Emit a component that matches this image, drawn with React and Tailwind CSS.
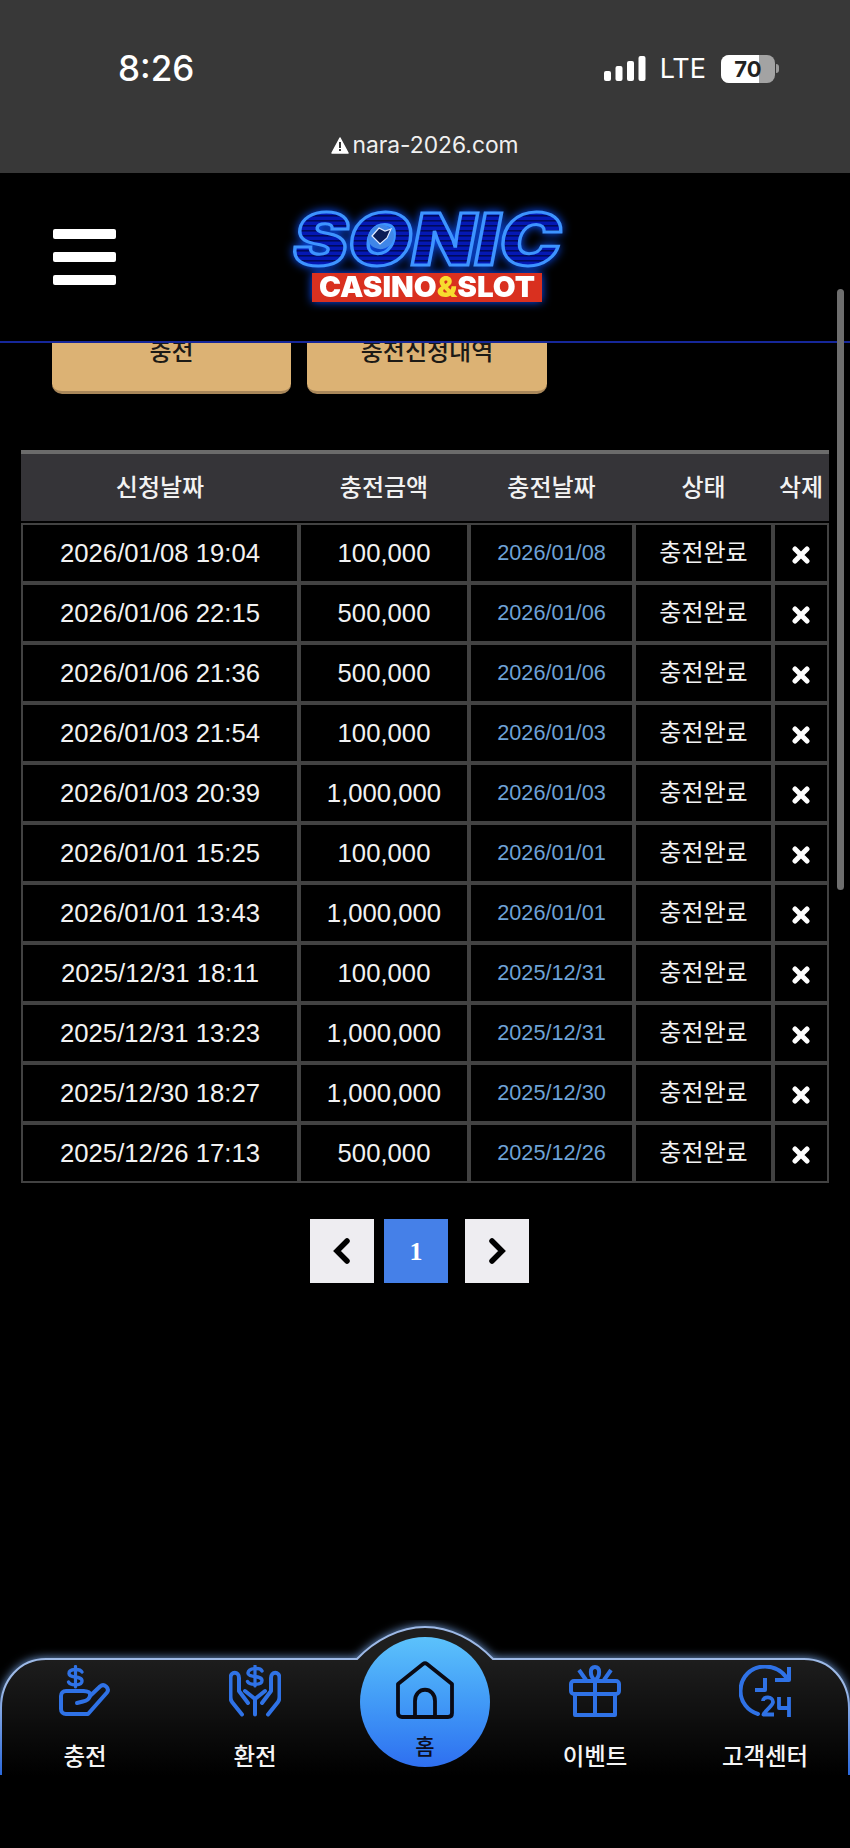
const rows = [
  ['2026/01/08 19:04', '100,000', '2026/01/08'],
  ['2026/01/06 22:15', '500,000', '2026/01/06'],
  ['2026/01/06 21:36', '500,000', '2026/01/06'],
  ['2026/01/03 21:54', '100,000', '2026/01/03'],
  ['2026/01/03 20:39', '1,000,000', '2026/01/03'],
  ['2026/01/01 15:25', '100,000', '2026/01/01'],
  ['2026/01/01 13:43', '1,000,000', '2026/01/01'],
  ['2025/12/31 18:11', '100,000', '2025/12/31'],
  ['2025/12/31 13:23', '1,000,000', '2025/12/31'],
  ['2025/12/30 18:27', '1,000,000', '2025/12/30'],
  ['2025/12/26 17:13', '500,000', '2025/12/26'],
];

const headers = ['신청날짜', '충전금액', '충전날짜', '상태', '삭제'];

const StatusBar = () => (
  <div className="h-[173px] shrink-0 bg-[#383838] text-white relative font-['Inter',sans-serif]">
    <div className="flex items-center justify-between pt-[49px] pl-[118px] pr-[71px] h-[88px]">
      <span className="text-[35px] font-medium leading-none">8:26</span>
      <div className="flex items-center">
        <svg width="42" height="25" viewBox="0 0 42 25" fill="#fff">
          <rect x="0" y="15" width="7" height="10" rx="2" />
          <rect x="11.5" y="10" width="7" height="15" rx="2" />
          <rect x="23" y="5" width="7" height="20" rx="2" />
          <rect x="34.5" y="0" width="7" height="25" rx="2" />
        </svg>
        <span className="ml-[14px] text-[27px] font-normal leading-none">LTE</span>
        <div className="ml-[15px] relative flex h-[28px] w-[54px] items-center justify-center rounded-[8px] bg-[#a3a3a3] overflow-hidden">
          <div className="absolute inset-y-0 left-0 w-[38px] bg-white" />
          <span className="relative text-[22px] font-bold leading-none text-[#222]">70</span>
        </div>
        <div className="ml-[1px] h-[9px] w-[3px] rounded-r bg-[#9a9a9a]" />
      </div>
    </div>
    <div className="flex items-center justify-center mt-[46px]">
      <svg width="18" height="17" viewBox="0 0 18 17" className="mr-[3px]">
        <path d="M9 1 L17 16 H1 Z" fill="#fff" stroke="#fff" strokeWidth="1.5" strokeLinejoin="round" />
        <rect x="8" y="5" width="2" height="6" fill="#383838" />
        <rect x="8" y="12" width="2" height="2" fill="#383838" />
      </svg>
      <span className="text-[22.8px] leading-none text-[#f0f0f0]">nara-2026.com</span>
    </div>
  </div>
);

const Logo = () => (
  <svg width="290" height="110" viewBox="0 0 290 110" className="drop-shadow-[0_0_5px_#0a50ff]">
    <defs>
      <pattern id="scan" width="4" height="5" patternUnits="userSpaceOnUse">
        <rect width="4" height="5" fill="#0418b4" />
        <rect width="4" height="1.6" fill="#000a5c" />
      </pattern>
    </defs>
    <text
      x="13"
      y="65"
      textLength="268"
      lengthAdjust="spacingAndGlyphs"
      fontFamily="'Inter', sans-serif"
      fontWeight="900"
      fontStyle="italic"
      fontSize="72"
      fill="url(#scan)"
      stroke="#3d94ff"
      strokeWidth="3"
    >
      SONIC
    </text>
    <ellipse cx="101" cy="37" rx="13" ry="12" fill="#3f86e8" transform="rotate(-20 101 37)" />
    <path d="M92 36 L99 28 L105 31 L111 29 L107 38 L100 44 Z" fill="#0b1c55" stroke="#dfeaff" strokeWidth="1.2" />
    <rect x="32" y="73" width="230" height="29" fill="#d9301f" />
    <text
      x="147"
      y="97"
      textAnchor="middle"
      textLength="216"
      lengthAdjust="spacingAndGlyphs"
      fontFamily="'Inter', sans-serif"
      fontWeight="900"
      fontSize="29"
      fill="#fff"
    >
      CASINO<tspan fill="#f7dc2e">&amp;</tspan>SLOT
    </text>
  </svg>
);

const Header = () => (
  <header className="relative z-10 h-[170px] shrink-0 bg-black border-b-2 border-[#16279a] flex items-start">
    <div className="ml-[53px] mt-[56px] w-[63px] flex flex-col gap-[13px]">
      <div className="h-[10px] rounded-[2px] bg-white" />
      <div className="h-[10px] rounded-[2px] bg-white" />
      <div className="h-[10px] rounded-[2px] bg-white" />
    </div>
    <div className="ml-[164px] mt-[27px]">
      <Logo />
    </div>
  </header>
);

const XMark = () => (
  <svg width="18" height="18" viewBox="0 0 18 18" className="mx-auto mt-[3px]">
    <path d="M3 3 L15 15 M15 3 L3 15" stroke="#fff" strokeWidth="5" strokeLinecap="round" />
  </svg>
);

const HistoryTable = () => (
  <table className="ml-[21px] w-[808px] table-fixed border-separate border-spacing-0 mt-[56px]">
    <colgroup>
      <col className="w-[278px]" />
      <col className="w-[170px]" />
      <col className="w-[165px]" />
      <col className="w-[139px]" />
      <col className="w-[56px]" />
    </colgroup>
    <thead>
      <tr>
        {headers.map((h) => (
          <th
            key={h}
            className="h-[73px] bg-[#353438] border-t-[4px] border-t-[#6b6b6b] border-b-2 border-b-black p-0 text-[24px] font-medium text-[#f2f2f2] whitespace-nowrap"
          >
            {h}
          </th>
        ))}
      </tr>
    </thead>
    <tbody>
      {rows.map((row) => (
        <tr key={row[0]}>
          <td className="h-[60px] p-0 border-2 border-[#424242] text-center text-[25.7px] text-[#f2f2f2]">{row[0]}</td>
          <td className="h-[60px] p-0 border-2 border-[#424242] text-center text-[25.7px] text-[#f2f2f2]">{row[1]}</td>
          <td className="h-[60px] p-0 border-2 border-[#424242] text-center text-[21.7px] text-[#6ea2d6]">{row[2]}</td>
          <td className="h-[60px] p-0 border-2 border-[#424242] text-center text-[24px] text-[#f2f2f2]">충전완료</td>
          <td className="h-[60px] p-0 border-2 border-[#424242] text-center">
            <XMark />
          </td>
        </tr>
      ))}
    </tbody>
  </table>
);

const Pager = () => (
  <div className="mt-[36px] ml-[310px] flex">
    <button className="h-[64px] w-[64px] bg-[#eeedf1] flex items-center justify-center">
      <svg width="20" height="28" viewBox="0 0 20 28">
        <path d="M15 4 L5 14 L15 24" fill="none" stroke="#000" strokeWidth="5.5" strokeLinecap="round" />
      </svg>
    </button>
    <button className="ml-[10px] h-[64px] w-[64px] bg-[#4580e8] text-white text-[26px] font-bold font-['Liberation_Serif',serif]">1</button>
    <button className="ml-[17px] h-[64px] w-[64px] bg-[#eeedf1] flex items-center justify-center">
      <svg width="20" height="28" viewBox="0 0 20 28">
        <path d="M5 4 L15 14 L5 24" fill="none" stroke="#000" strokeWidth="5.5" strokeLinecap="round" />
      </svg>
    </button>
  </div>
);

const IconCharge = () => (
  <svg width="52" height="52" viewBox="0 0 52 52" fill="none" stroke="#2f72e6" strokeWidth="4" strokeLinecap="round" strokeLinejoin="round">
    <path d="M23 7 C21 3.5 10 3.5 10 8.5 C10 14 23 10 23 16 C23 21 11.5 21 9.5 17" strokeWidth="3.4" />
    <path d="M16.5 1.5 V22" strokeWidth="3.2" />
    <path d="M24 26 H7 C4 26 2 28 2 31 V44 C2 47 4 49 7 49 H29 L48 27.5 C51 23 45 18 41 21.5 L31 31" />
    <path d="M24 26 C29 26 32 27.5 31 31 C30 34.5 27 36 24 36.5 L18 38" />
  </svg>
);

const IconExchange = () => (
  <svg width="52" height="52" viewBox="0 0 52 52" fill="none" stroke="#2f72e6" strokeWidth="4" strokeLinecap="round" strokeLinejoin="round">
    <path d="M33 6 C31.5 2.5 19.5 2.5 19 8 C18.5 13 33 10 33 15.5 C33 20.5 20.5 20.5 18.5 16.5" strokeWidth="3.4" />
    <path d="M26 1 V21" strokeWidth="3.2" />
    <path d="M13 49.5 L3 37 C2 35.5 1.5 34 1.5 32 V13 C1.5 6 10 6 10 13 V26 L19 38" />
    <path d="M39 49.5 L49 37 C50 35.5 50.5 34 50.5 32 V13 C50.5 6 42 6 42 13 V26 L33 38" />
    <path d="M26 49.5 V34 L16 26 M26 34 L36 26" />
  </svg>
);

const IconGift = () => (
  <svg width="52" height="52" viewBox="0 0 52 52" fill="none" stroke="#2f72e6" strokeWidth="4" strokeLinejoin="round">
    <rect x="2" y="16" width="48" height="13" rx="3" />
    <path d="M6 29 V50 H46 V29 M26 16 V50" />
    <path d="M26 16 C20 10 21 2 26 2 C31 2 32 10 26 16 Z" />
    <path d="M10 5 L17 15 M42 5 L35 15" />
  </svg>
);

const IconClock = () => (
  <svg width="52" height="52" viewBox="0 0 52 52" fill="none" stroke="#2f72e6" strokeWidth="4" strokeLinejoin="round">
    <path d="M19 49 C9 46 1.5 37 1.5 26 C1.5 12 12 1.5 26 1.5 C35 1.5 43 6 48 13" strokeLinecap="round" />
    <path d="M50 4 V15 H38" strokeLinecap="square" />
    <path d="M26 13 V25 H16" />
    <path d="M24 36 C24 31 34 31 34 37 C34 41 27 44 24.5 49.5 H35" strokeWidth="3.8" />
    <path d="M40 32 V43 H50 M50 32 V52" strokeWidth="3.8" />
  </svg>
);

const IconHome = () => (
  <svg width="58" height="58" viewBox="0 0 58 58" fill="none" stroke="#0a0a14" strokeWidth="3.8" strokeLinejoin="round" strokeLinecap="round">
    <path d="M2 23 L27 3 Q29 1.5 31 3 L56 23 V52 C56 55 54 56 52 56 H6 C4 56 2 55 2 52 Z" />
    <path d="M19 56 V40 C19 25 39 25 39 40 V56" />
  </svg>
);

const NavItem = ({ icon, label }) => (
  <div className="flex flex-col items-center pt-[45px]">
    {icon}
    <span className="mt-[25px] text-[23.4px] font-medium leading-[30px] text-[#f5f5f5] whitespace-nowrap">{label}</span>
  </div>
);

const BottomNav = () => (
  <nav className="relative h-[228px] shrink-0">
    <svg width="850" height="155" viewBox="0 0 850 155" className="absolute left-0 top-0">
      <defs>
        <linearGradient id="navFill" x1="0" y1="0" x2="0" y2="1">
          <stop offset="0.2" stopColor="#1e1e1e" />
          <stop offset="1" stopColor="#000" />
        </linearGradient>
        <linearGradient id="navStroke" x1="0" y1="0" x2="0" y2="1">
          <stop offset="0.4" stopColor="#9db9e6" />
          <stop offset="1" stopColor="#2a68dc" />
        </linearGradient>
      </defs>
      <path
        d="M1 156 V88 C1 60 20 39 46 39 H357 C375 20 400 7 425 7 C450 7 475 20 493 39 H804 C830 39 849 60 849 88 V156"
        fill="url(#navFill)"
        stroke="url(#navStroke)"
        strokeWidth="2"
        className="drop-shadow-[0_0_5px_#6f9ad8]"
      />
    </svg>
    <div className="relative grid grid-cols-5">
      <NavItem icon={<IconCharge />} label="충전" />
      <NavItem icon={<IconExchange />} label="환전" />
      <div className="flex justify-center pt-[17px]">
        <div className="flex h-[130px] w-[130px] flex-col items-center rounded-full bg-gradient-to-b from-[#5cc2fb] to-[#2f6ff0] pt-[24px]">
          <IconHome />
          <span className="mt-[15px] text-[21px] font-medium leading-[26px] text-[#0c0c20]">홈</span>
        </div>
      </div>
      <NavItem icon={<IconGift />} label="이벤트" />
      <NavItem icon={<IconClock />} label="고객센터" />
    </div>
  </nav>
);

const App = () => (
  <div className="relative flex h-[1848px] w-[850px] flex-col overflow-hidden bg-black font-['Liberation_Sans','Noto_Sans_CJK_KR',sans-serif]">
    <StatusBar />
    <Header />
    <main className="min-h-0 flex-1 overflow-hidden">
      <div className="-mt-[31px] ml-[52px] flex gap-[16px]">
        <button className="h-[82px] w-[239px] rounded-[10px] bg-[#dcb274] border-b-[3px] border-[#a9875a] text-[24px] font-medium text-[#1c1a16]">충전</button>
        <button className="h-[82px] w-[240px] rounded-[10px] bg-[#dcb274] border-b-[3px] border-[#a9875a] text-[24px] font-medium text-[#1c1a16]">충전신청내역</button>
      </div>
      <HistoryTable />
      <Pager />
    </main>
    <BottomNav />
    <div className="absolute right-[6px] top-[289px] z-20 h-[601px] w-[7px] rounded-full bg-[#6e6e6e]" />
  </div>
);

export default App;
